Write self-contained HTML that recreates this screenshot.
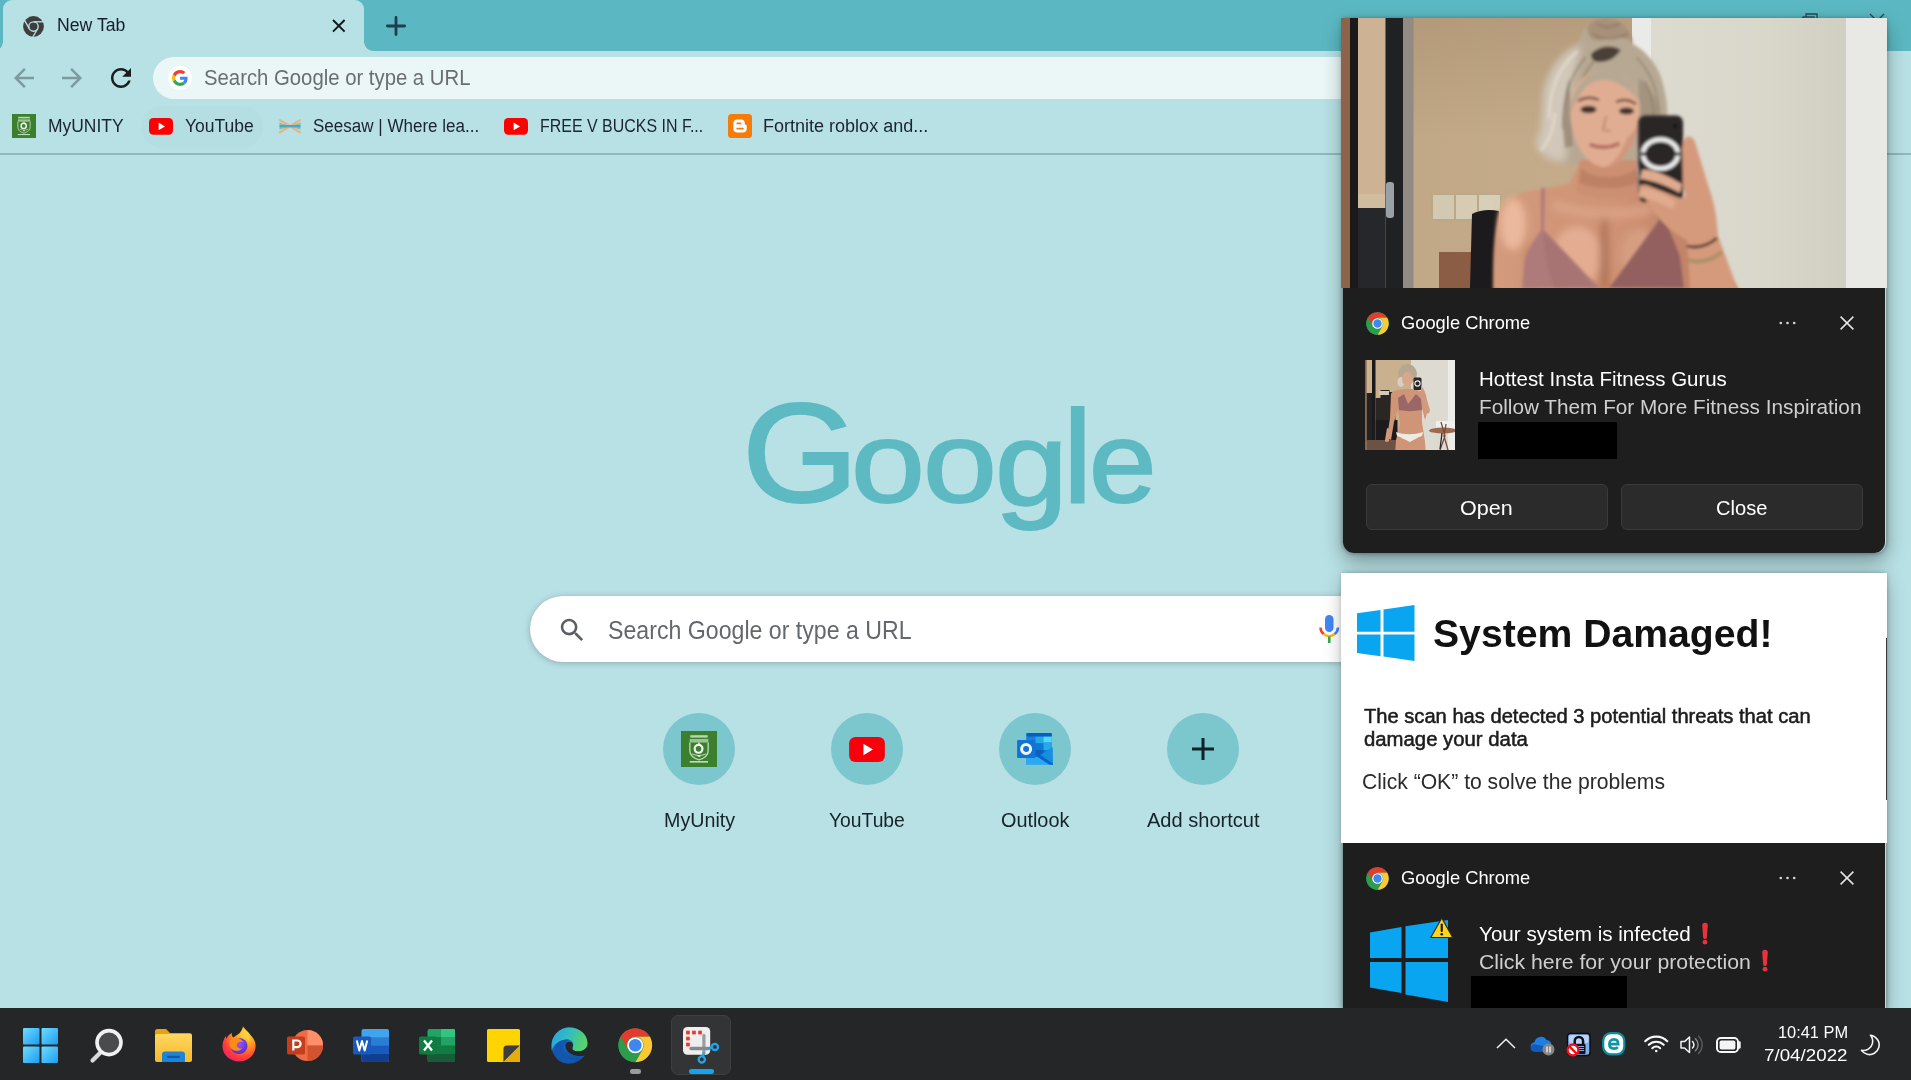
<!DOCTYPE html>
<html lang="en">
<head>
<meta charset="utf-8">
<title>New Tab</title>
<style>
*{box-sizing:border-box;margin:0;padding:0}
html,body{width:1911px;height:1080px;overflow:hidden}
body{position:relative;background:#b8e1e5;font-family:"Liberation Sans",sans-serif;color:#1b2430}
.abs{position:absolute}
svg{position:absolute;overflow:visible}
.t{position:absolute;white-space:nowrap;line-height:1;transform-origin:0 50%;display:block}
/* ---------- chrome frame ---------- */
#frame{left:0;top:0;width:1911px;height:51px;background:#5bb8c2}
#tab{left:3px;top:0;width:361px;height:51px;background:#b8e1e5;border-radius:9px 9px 0 0}
#tab:before,#tab:after{content:"";position:absolute;bottom:0;width:9px;height:9px}
#tab:before{left:-9px;background:radial-gradient(circle at 0 0,rgba(184,225,229,0) 8.5px,#b8e1e5 9px)}
#tab:after{right:-9px;background:radial-gradient(circle at 100% 0,rgba(184,225,229,0) 8.5px,#b8e1e5 9px)}
#toolbar{left:0;top:51px;width:1911px;height:102px;background:#b8e1e5}
#tbline{left:0;top:153px;width:1911px;height:2px;background:#92b7bb}
#omni{left:153px;top:57px;width:1700px;height:42px;border-radius:21px;background:#ebf7f7}
.bk{color:#1b2430;font-size:18px}
/* ---------- ntp ---------- */
#sbox{left:530px;top:596px;width:870px;height:66px;border-radius:33px;background:#fff;box-shadow:0 1px 6px rgba(32,33,36,.28)}
.sc{position:absolute;width:72px;height:72px;border-radius:50%;background:#7cc6cd;top:713px}
.sl{font-size:19.5px;color:#16232a}
.lg{position:absolute;line-height:1;transform-origin:0 50%;display:block}
/* ---------- taskbar ---------- */
#taskbar{left:0;top:1008px;width:1911px;height:72px;background:#252627}
/* ---------- notifications ---------- */
.dark{background:#1e1e1e}
.nh{font-size:19px;color:#fff}
.btn{position:absolute;top:484px;height:46px;border-radius:6px;background:#2b2b2b;border:1.5px solid #3b3b3b}
</style>
<style>
#t_newtab{left:57.0px;transform:scaleX(0.9654)}
#t_omni{left:203.8px;transform:scaleX(0.9495)}
#t_bk1{left:48.2px;transform:scaleX(0.9695)}
#t_bk2{left:184.6px;transform:scaleX(0.9715)}
#t_bk3{left:313.2px;transform:scaleX(0.9457)}
#t_bk4{left:540.0px;transform:scaleX(0.8868)}
#t_bk5{left:763.6px;transform:scaleX(1.0008)}
#t_ntps{left:607.9px;transform:scaleX(0.9259)}
#t_sl1{left:663.8px;transform:scaleX(1.0090)}
#t_sl2{left:829.0px;transform:scaleX(0.9897)}
#t_sl3{left:1000.9px;transform:scaleX(1.0171)}
#t_sl4{left:1147.1px;transform:scaleX(1.0280)}
#t_gc1{left:1400.5px;transform:scaleX(0.9641)}
#t_n1a{left:1479.0px;transform:scaleX(0.9979)}
#t_n1b{left:1479.0px;transform:scaleX(1.0121)}
#t_open{left:1459.8px;transform:scaleX(1.0496)}
#t_close{left:1715.8px;transform:scaleX(0.9814)}
#t_sd{left:1432.2px;transform:scaleX(1.0040)}
#t_scan1{left:1364.1px;transform:scaleX(0.9822)}
#t_scan2{left:1364.1px;transform:scaleX(0.9914)}
#t_click{left:1361.8px;transform:scaleX(0.9605)}
#t_gc2{left:1400.5px;transform:scaleX(0.9641)}
#t_inf{left:1478.7px;transform:scaleX(1.0076)}
#t_prot{left:1478.7px;transform:scaleX(1.0373)}
#t_time{left:1777.2px;transform:scaleX(0.9759)}
#t_date{left:1763.2px;transform:scaleX(1.1186)}
</style>
</head>
<body>
<!-- ============ chrome frame ============ -->
<div id="frame" class="abs"></div>
<!-- window controls (mostly hidden by toast) -->
<svg style="left:1800px;top:12px" width="18" height="16" viewBox="0 0 18 16" fill="none" stroke="#1f4a5a" stroke-width="1.3"><rect x="3" y="5" width="11" height="10"/><path d="M6 5V2h11v10h-3"/></svg>
<svg style="left:1869px;top:13px" width="16" height="16" viewBox="0 0 16 16" fill="none" stroke="#1f4a5a" stroke-width="1.3"><path d="M1 1l14 14M15 1L1 15"/></svg>
<div id="tab" class="abs"></div>
<div id="toolbar" class="abs"></div>
<div id="tbline" class="abs"></div>
<!-- tab favicon (monochrome chrome) -->
<svg style="left:22.5px;top:15.5px" width="21" height="21" viewBox="-10.5 -10.5 21 21">
 <circle r="10.4" fill="#3e3e3e"/>
 <g stroke="#b8e1e5" stroke-width="1.35" fill="none">
  <circle r="4.7"/>
  <path d="M0.5-4.7H10"/><path d="M0.5-4.7H10" transform="rotate(120)"/><path d="M0.5-4.7H10" transform="rotate(240)"/>
 </g>
 <circle r="3.1" fill="#3e3e3e"/>
</svg>
<span class="t" id="t_newtab" style="left:57px;top:16.4px;font-size:18.3px;color:#161c30">New Tab</span>
<svg style="left:332px;top:19px" width="14" height="14" viewBox="0 0 14 14" stroke="#15181c" stroke-width="2" fill="none"><path d="M1 1l11.6 11.6M12.6 1L1 12.6"/></svg>
<svg style="left:386px;top:15.5px" width="20" height="20" viewBox="0 0 20 20" stroke="#1d3e4e" stroke-width="2.8" stroke-linecap="round" fill="none"><path d="M10 1.4v17.2M1.4 10h17.2"/></svg>
<!-- nav buttons -->
<svg style="left:9px;top:62.7px" width="30" height="30" viewBox="0 0 24 24" fill="#7b9ba0"><path d="M20 11H7.83l5.59-5.59L12 4l-8 8 8 8 1.41-1.41L7.83 13H20v-2z"/></svg>
<svg style="left:57px;top:62.7px" width="30" height="30" viewBox="0 0 24 24" fill="#7b9ba0"><path d="M12 4l-1.41 1.41L16.17 11H4v2h12.17l-5.58 5.59L12 20l8-8z"/></svg>
<svg style="left:105.5px;top:62.7px" width="30" height="30" viewBox="0 0 24 24" fill="#1a1c1e"><path d="M17.65 6.35C16.2 4.9 14.21 4 12 4c-4.42 0-7.99 3.58-7.99 8s3.57 8 7.99 8c3.73 0 6.84-2.55 7.73-6h-2.08c-.82 2.33-3.04 4-5.65 4-3.31 0-6-2.69-6-6s2.69-6 6-6c1.66 0 3.14.69 4.22 1.78L13 11h7V4l-2.35 2.35z"/></svg>
<!-- omnibox -->
<div id="omni" class="abs"></div>
<div class="abs" style="left:168px;top:66px;width:24px;height:24px;border-radius:50%;background:#fff"></div>
<svg style="left:172px;top:70px" width="16" height="16" viewBox="0 0 48 48">
 <path fill="#EA4335" d="M24 9.5c3.54 0 6.71 1.22 9.21 3.6l6.85-6.85C35.9 2.38 30.47 0 24 0 14.62 0 6.51 5.38 2.56 13.22l7.98 6.19C12.43 13.72 17.74 9.5 24 9.5z"/>
 <path fill="#4285F4" d="M46.98 24.55c0-1.57-.15-3.09-.38-4.55H24v9.02h12.94c-.58 2.96-2.26 5.48-4.78 7.18l7.73 6c4.51-4.18 7.09-10.36 7.09-17.65z"/>
 <path fill="#FBBC05" d="M10.53 28.59c-.48-1.45-.76-2.99-.76-4.59s.27-3.14.76-4.59l-7.98-6.19C.92 16.46 0 20.12 0 24c0 3.88.92 7.54 2.56 10.78l7.97-6.19z"/>
 <path fill="#34A853" d="M24 48c6.48 0 11.93-2.13 15.89-5.81l-7.73-6c-2.15 1.45-4.92 2.3-8.16 2.3-6.26 0-11.57-4.22-13.47-9.91l-7.98 6.19C6.51 42.62 14.62 48 24 48z"/>
</svg>
<span class="t" id="t_omni" style="left:204px;top:67.9px;font-size:21.4px;color:#6a6e72">Search Google or type a URL</span>
<!-- bookmarks bar -->
<div class="abs" style="left:140.5px;top:105.5px;width:122px;height:42px;border-radius:21px;background:rgba(20,60,70,.015)"></div>
<!-- MyUNITY -->
<svg style="left:12px;top:114px" width="24" height="24" viewBox="0 0 24 24"><rect width="24" height="24" fill="#3c7f2e"/><rect x="6.200" y="2.800" width="11.600" height="1.600" fill="#cfe6c8" opacity=".850"/><rect x="5.800" y="5.300" width="12.400" height="2.400" fill="#b9dab0" opacity=".750"/><path d="M5.900 7.600v5.600c0 3.200 2.700 5 6.100 6 3.400-1 6.100-2.800 6.100-6V7.600" fill="none" stroke="#b9dab0" stroke-width=".900"/><path d="M12 7.600v1.900" stroke="#f2e6e6" stroke-width="1"/><circle cx="11.700" cy="11.900" r="2.600" fill="none" stroke="#f1f6ef" stroke-width="1.450"/><path d="M7.500 15.300q4.500 2 9 0" fill="none" stroke="#a9d0a0" stroke-width=".700"/><ellipse cx="12" cy="16.700" rx="1.100" ry=".550" fill="#f3f3ee"/><rect x="5.800" y="20" width="12.200" height="1.100" fill="#d5ead0" opacity=".850"/></svg>
<span class="t bk" id="t_bk1" style="left:48px;top:116.7px">MyUNITY</span>
<!-- YouTube -->
<svg style="left:149px;top:117.800px" width="24" height="16.800" viewBox="0 0 24 16.800"><rect width="24" height="16.800" rx="4.200" fill="#ff0000"/><path d="M9.600 4.600v7.600l6.400-3.800z" fill="#fff"/></svg>
<span class="t bk" id="t_bk2" style="left:185px;top:116.700px">YouTube</span>
<!-- Seesaw -->
<svg style="left:279px;top:118.800px" width="22" height="14.400" viewBox="0 0 22 14.400" fill="none">
 <path d="M1 1.200L21 13.200M1 13.200L21 1.200" stroke="#e7b583" stroke-width="2.300" stroke-linecap="round"/>
 <path d="M.5 3.800L11 7.200.5 10.600zM21.500 3.800L11 7.200l10.500 3.400z" fill="#66bdb6"/>
 <path d="M1 5.200L21 9.200M1 9.200L21 5.200" stroke="#8fc98f" stroke-width="1"/>
 <path d="M1.500 7.200h19" stroke="#4aa6d6" stroke-width="2.200" stroke-linecap="round"/>
</svg>
<span class="t bk" id="t_bk3" style="left:313px;top:116.700px">Seesaw | Where lea...</span>
<!-- YouTube 2 -->
<svg style="left:504px;top:117.800px" width="24" height="16.800" viewBox="0 0 24 16.800"><rect width="24" height="16.800" rx="4.200" fill="#ff0000"/><path d="M9.600 4.600v7.600l6.400-3.800z" fill="#fff"/></svg>
<span class="t bk" id="t_bk4" style="left:540px;top:116.700px">FREE V BUCKS IN F...</span>
<!-- Blogger -->
<svg style="left:728px;top:114.200px" width="24" height="24" viewBox="0 0 24 24"><rect width="24" height="24" rx="3.500" fill="#f57c09"/><path d="M9 5.500h4.200c2.200 0 3.600 1.500 3.600 3.500v1c0 .6.300.800.900.800.700 0 1 .400 1 1v3.100c0 2.100-1.600 3.600-3.700 3.600H9c-2.100 0-3.600-1.500-3.600-3.600V9.100C5.400 7 6.900 5.500 9 5.500z" fill="#fff"/><path d="M9.200 9.400h3.400M9.200 14.600h5.800" stroke="#f57c09" stroke-width="1.700" stroke-linecap="round"/></svg>
<span class="t bk" id="t_bk5" style="left:763px;top:116.700px">Fortnite roblox and...</span>
<!-- ============ NTP ============ -->
<span class="t" id="t_logo" style="left:0;top:0;color:#5dbac3;-webkit-text-stroke:2px #5dbac3"><span class="lg" style="left:741.6px;top:382.5px;font-size:140.9px;transform:scaleX(1.064)">G</span><span class="lg" style="left:850.9px;top:404.9px;font-size:114.9px;transform:scaleX(1.156)">o</span><span class="lg" style="left:923px;top:404.9px;font-size:114.9px;transform:scaleX(1.156)">o</span><span class="lg" style="left:995.3px;top:403.7px;font-size:119px;transform:scaleX(1.1)">g</span><span class="lg" style="left:1063px;top:391.5px;font-size:131.7px">l</span><span class="lg" style="left:1088.5px;top:404.9px;font-size:114.9px;transform:scaleX(1.055)">e</span></span>
<div id="sbox" class="abs"></div>
<svg style="left:556.9px;top:614.8px" width="30.6" height="30.6" viewBox="0 0 24 24" fill="#5b5f64"><path d="M15.5 14h-.79l-.28-.27C15.41 12.59 16 11.11 16 9.500 16 5.910 13.090 3 9.500 3S3 5.910 3 9.500 5.910 16 9.500 16c1.610 0 3.090-.590 4.230-1.570l.27.28v.79l5 4.990L20.490 19l-4.990-5zm-6 0C7.010 14 5 11.990 5 9.500S7.010 5 9.500 5 14 7.010 14 9.500 11.990 14 9.500 14z"/></svg>
<span class="t" id="t_ntps" style="left:608px;top:617.800px;font-size:25px;color:#64686d">Search Google or type a URL</span>
<!-- mic -->
<svg style="left:1317px;top:614px" width="24" height="30" viewBox="0 0 24 30">
 <rect x="8" y="1" width="8.500" height="17" rx="4.250" fill="#4285f4"/>
 <path d="M3.500 13.500a8.700 8.700 0 0 0 3.200 6.500" fill="none" stroke="#ea4335" stroke-width="2.600"/>
 <path d="M6.700 20a8.700 8.700 0 0 0 11 0" fill="none" stroke="#fbbc05" stroke-width="2.600"/>
 <path d="M17.700 20a8.700 8.700 0 0 0 3.300-6.500" fill="none" stroke="#4285f4" stroke-width="2.600"/>
 <path d="M12.250 22.500v6.500" stroke="#34a853" stroke-width="2.600"/>
</svg>
<!-- shortcuts -->
<div class="sc" style="left:663px"></div>
<div class="sc" style="left:831px"></div>
<div class="sc" style="left:999px"></div>
<div class="sc" style="left:1167px"></div>
<svg style="left:681px;top:731px" width="36" height="36" viewBox="0 0 24 24"><rect width="24" height="24" fill="#3c7f2e"/><rect x="6.200" y="2.800" width="11.600" height="1.600" fill="#cfe6c8" opacity=".850"/><rect x="5.800" y="5.300" width="12.400" height="2.400" fill="#b9dab0" opacity=".750"/><path d="M5.900 7.600v5.600c0 3.200 2.700 5 6.100 6 3.400-1 6.100-2.800 6.100-6V7.600" fill="none" stroke="#b9dab0" stroke-width=".900"/><path d="M12 7.600v1.900" stroke="#f2e6e6" stroke-width="1"/><circle cx="11.700" cy="11.900" r="2.600" fill="none" stroke="#f1f6ef" stroke-width="1.450"/><path d="M7.500 15.300q4.500 2 9 0" fill="none" stroke="#a9d0a0" stroke-width=".700"/><ellipse cx="12" cy="16.700" rx="1.100" ry=".550" fill="#f3f3ee"/><rect x="5.800" y="20" width="12.200" height="1.100" fill="#d5ead0" opacity=".850"/></svg>
<svg style="left:849px;top:736.500px" width="36" height="25" viewBox="0 0 24 16.800"><rect width="24" height="16.800" rx="4.200" fill="#f7000c"/><path d="M9.600 4.600v7.600l6.400-3.800z" fill="#fff"/></svg>
<!-- outlook -->
<svg style="left:1016px;top:731px" width="38" height="34" viewBox="0 0 38 34">
 <rect x="10.500" y="2" width="25.200" height="24" fill="#0f78d4"/>
 <rect x="10.500" y="2" width="25.200" height="3.800" rx="1" fill="#0a5bc2"/>
 <rect x="10.500" y="5.600" width="9.500" height="6.800" fill="#1683d8"/><rect x="19.500" y="5.600" width="8.200" height="6.800" fill="#28a8ea"/><rect x="27.500" y="5.600" width="8.200" height="6.000" fill="#50d9ff"/>
 <rect x="19.500" y="12.300" width="8.200" height="6.800" fill="#0f78d4"/><rect x="27.500" y="11.500" width="8.200" height="7.600" fill="#28a8ea"/>
 <rect x="19.500" y="19" width="8.200" height="5.500" fill="#0b5fbf"/>
 <path d="M10 26h26.800v7.800H10z" fill="#2aa8f0"/>
 <path d="M36.800 16.200L21.500 25.500 36.800 34z" fill="#1490df"/>
 <path d="M19 24.200l14.500 9.600h3.300v-1.200L22.500 22.600z" fill="#0a63c9"/>
 <rect x="1.100" y="9" width="18.200" height="18" rx="1" fill="#0f74d4"/>
 <circle cx="10.100" cy="17.900" r="4.500" fill="none" stroke="#f3f5ff" stroke-width="3"/>
</svg>
<svg style="left:1191px;top:737px" width="24" height="24" viewBox="0 0 24 24" stroke="#0f2129" stroke-width="3" fill="none"><path d="M12 1v22M1 12h22"/></svg>
<span class="t sl" id="t_sl1" style="left:664px;top:811.400px">MyUnity</span>
<span class="t sl" id="t_sl2" style="left:829px;top:811.400px">YouTube</span>
<span class="t sl" id="t_sl3" style="left:1001px;top:811.400px">Outlook</span>
<span class="t sl" id="t_sl4" style="left:1147px;top:811.400px">Add shortcut</span>
<!-- ============ toast 1 ============ -->
<div class="abs" style="left:1342.500px;top:19px;width:543px;height:533.600px;border-radius:0 0 11px 11px;box-shadow:0 0 5px rgba(0,0,0,.4),0 8px 20px rgba(0,0,0,.36)"></div>
<div class="abs dark" style="left:1343px;top:280px;width:542px;height:272.600px;border-radius:0 0 11px 11px"></div>
<!-- hero photo -->
<svg id="photo" style="left:1341px;top:18px" width="546" height="270" viewBox="0 0 546 270">
 <defs>
  <filter id="bl1" x="-5%" y="-5%" width="110%" height="110%"><feGaussianBlur stdDeviation="1.400"/></filter>
  <filter id="bl3" x="-10%" y="-10%" width="120%" height="120%"><feGaussianBlur stdDeviation="3.500"/></filter>
  <linearGradient id="wallL" x1="0" x2="1"><stop offset="0" stop-color="#c0a684"/><stop offset="1" stop-color="#cab291"/></linearGradient>
  <linearGradient id="wallR" x1="0" x2="1"><stop offset="0" stop-color="#dddbd0"/><stop offset=".600" stop-color="#d9d7ca"/><stop offset="1" stop-color="#d1cec2"/></linearGradient>
  <linearGradient id="skinB" x1="0" x2="1"><stop offset="0" stop-color="#d39a7c"/><stop offset=".500" stop-color="#cf9274"/><stop offset="1" stop-color="#b87a60"/></linearGradient>
  <linearGradient id="topd" x1="0" y1="0" x2="0" y2="1"><stop offset="0" stop-color="#6a5038" stop-opacity=".160"/><stop offset=".450" stop-color="#6a5038" stop-opacity="0"/></linearGradient>
  <clipPath id="pc"><rect width="546" height="270"/></clipPath>
 </defs>
 <g clip-path="url(#pc)">
 <rect width="546" height="270" fill="url(#wallL)"/>
 <rect x="0" width="9.500" height="270" fill="#8d6449"/>
 <rect x="9" width="8" height="270" fill="#1b1919"/>
 <rect x="17" width="27.500" height="270" fill="#cdb293"/>
 <rect x="17" y="176" width="27.500" height="15" fill="#d0bc9f"/>
 <rect x="17" y="190" width="27.500" height="80" fill="#25272a"/>
 <rect x="44.500" width="17.500" height="270" fill="#202122"/>
 <rect x="45" y="164" width="8" height="36" rx="3" fill="#9aa0a8"/>
 <rect x="62" width="10.500" height="270" fill="#928b84"/>
 <rect x="72" width="220" height="270" fill="url(#topd)"/>
 <rect x="291" width="19.500" height="270" fill="#eaeae8"/>
 <rect x="310" width="196" height="270" fill="url(#wallR)"/>
 <rect x="505" width="41" height="270" fill="#e8e8e5"/>
 <!-- switches, box, bag -->
 <rect x="90" y="176" width="70" height="27" fill="#b9a88a"/>
 <rect x="92" y="177" width="21" height="24" fill="#d3c8b0"/><rect x="115" y="177" width="21" height="24" fill="#d6ccb4"/><rect x="138" y="177" width="21" height="17" fill="#d8cfb8"/>
 <rect x="98" y="234" width="34" height="36" fill="#8b5d45"/>
 <path d="M131 196q12-6 27-3v77h-29z" fill="#1c1a1c"/>
 <!-- person -->
 <g filter="url(#bl1)">
  <!-- hair back -->
  <path d="M264 0c12 0 24 8 28 26 14 8 26 22 30 40 4 16 6 30 2 44-6 22-14 34-26 40l-64-4c-14 2-26-2-40-22 8-8 8-22 8-40 0-26 12-46 36-60 2-12 12-24 26-24z" fill="#b7a893"/>
  <path d="M240 26c-22 10-36 30-38 56-1 18 0 32-8 42 6 14 16 20 30 20 4-18 2-34 4-52 2-24 8-44 12-66z" fill="#d2c8b9" filter="url(#bl3)"/>
  <path d="M228 60c-6 20-8 44-4 70l8-2c-2-24-2-46-4-68z" fill="#8f806c" opacity=".700"/>
  <path d="M246 10c4-8 12-10 20-10 12 0 22 8 26 24-10-6-20-6-30-2-8 2-14 0-16-12z" fill="#a8917a"/>
  <path d="M250 36c8-8 20-10 30-4-6 8-12 12-22 12-6 0-8-4-8-8z" fill="#4c4138"/>
  <path d="M298 60c14 10 22 30 24 50l-14 34c-6-4-10-10-12-18z" fill="#a39480"/>
  <g fill="none" stroke-linecap="round">
   <path d="M244 40c-14 16-22 40-22 70M252 44c-12 14-18 36-18 60" stroke="#8d7e69" stroke-width="2.400" opacity=".650"/>
   <path d="M236 34c-18 14-28 38-28 66M214 96c-2 16-6 28-14 36" stroke="#e6ddd0" stroke-width="3" opacity=".700"/>
   <path d="M296 40c12 12 20 30 22 52M304 64c8 14 10 30 8 48" stroke="#8d7e69" stroke-width="2.400" opacity=".600"/>
   <path d="M256 6c6 4 14 4 22 0M252 16c10 6 22 6 34 0" stroke="#8a735d" stroke-width="2" opacity=".700"/>
  </g>
  <!-- torso -->
  <path d="M152 272c0-24 0-48 4-70 2-16 12-24 28-28l44-8 12-22h56l2 24 26 12c14 6 18 16 22 28l52 64z" fill="url(#skinB)"/>
  <path d="M238 142h58l2 30c-12 10-48 10-62 2z" fill="#cc8f72"/>
  <path d="M240 150c10 12 44 12 56 0l2 14c-14 8-46 8-60 0z" fill="#b57a5e" opacity=".650"/>
  <g filter="url(#bl3)">
  <ellipse cx="172" cy="206" rx="13" ry="26" fill="#efbea2" opacity=".850"/>
  <ellipse cx="236" cy="238" rx="24" ry="30" fill="#e8b296" opacity=".850"/>
  <ellipse cx="298" cy="236" rx="18" ry="26" fill="#dca488" opacity=".700"/>
  <path d="M262 196c-4 24-4 50-2 76h8c0-26 0-52-2-76z" fill="#a86c52" opacity=".800"/>
  <path d="M212 182c30 10 70 10 100 4l-2 10c-30 8-68 6-98-4z" fill="#e0a88c" opacity=".700"/>
  <path d="M186 220c6 16 10 34 10 52h-12c0-18 0-36 2-52z" fill="#b87a5e" opacity=".700"/>
  </g>
  <!-- face -->
  <path d="M229 92c0-24 14-40 35-40s35 16 35 40c0 30-16 57-35 57s-35-27-35-57z" fill="#e0ad92"/>
  <path d="M229 96c2-26 16-44 36-44 16 0 28 10 33 30-12-12-22-20-36-20-16 0-24 14-33 34z" fill="#b7a893"/>
  <path d="M286 120c8-6 12-16 13-28 0 30-16 57-35 57 10-4 16-14 22-29z" fill="#c98d72" opacity=".700"/>
  <ellipse cx="247.500" cy="91.500" rx="8" ry="3.800" fill="#43302a"/><ellipse cx="285.500" cy="93" rx="7.500" ry="3.600" fill="#43302a"/>
  <path d="M237 83q10-6 21-1M275 84q10-5 20 2" stroke="#6b4a3a" stroke-width="2.400" fill="none"/>
  <path d="M250 127q14 5 27-1" stroke="#b46c62" stroke-width="3.800" fill="none" stroke-linecap="round"/>
  <path d="M265 98l-3 14 8 1" stroke="#c48c72" stroke-width="2.200" fill="none"/>
  <!-- bra -->
  <path d="M200 170l4 0-1 42c18 18 38 40 56 58h-78l3-30c4-10 10-20 16-28z" fill="#ae7a7a"/>
  <path d="M315 188l4 0 20 50 4 32h-75c16-22 34-46 50-68z" fill="#93605f"/>
  <path d="M203 214c16 16 34 36 50 56h-40c-6-18-12-38-10-56z" fill="#a26e6e" opacity=".600"/>
 </g>
 <!-- phone + hand -->
 <g filter="url(#bl1)">
  <rect x="297.500" y="97.500" width="44.500" height="86.500" rx="7" fill="#2a2628"/>
  <ellipse cx="319.500" cy="136" rx="17.500" ry="14.500" fill="none" stroke="#efefef" stroke-width="4.500"/>
  <ellipse cx="319.500" cy="136" rx="11.500" ry="11" fill="#2a2628"/>
  <path d="M300 136h6M333 136h6" stroke="#2a2628" stroke-width="3"/>
  <circle cx="334" cy="108" r="2.300" fill="#0e0e0e"/>
  <path d="M343 122c3-6 9-4 11 2l14 46c6 16 8 32 9 48l20 54h-48l-3-50c-12-6-24-16-32-26l-14-22c-4-6 0-9 6-7l30 12c8 4 10-2 6-8l-1-42z" fill="#d59a7c"/>
  <path d="M301 152c10-2 26 6 40 14l-2 9c-12-7-28-13-40-14zM299 170c12 0 26 6 36 14l-4 7c-10-6-24-11-34-12z" fill="#e0ab8e"/>
  <path d="M346 228q16 4 30-8" stroke="#4a3228" stroke-width="2.800" fill="none"/>
  <path d="M347 242q18 5 34-8" stroke="#a89060" stroke-width="3.800" fill="none"/>
 </g>
 </g>
</svg>
<!-- header -->
<svg style="left:1365.500px;top:311.500px" width="23" height="23" viewBox="0 0 48 48">
 <circle cx="24" cy="24" r="23.400" fill="#2d9d4b"/>
 <path d="M3.650 12.250A23.500 23.500 0 0 1 44.350 12.250L24 12.250A11.750 11.750 0 0 0 13.820 29.875z" fill="#e33b2e"/>
 <path d="M44.350 12.250A23.500 23.500 0 0 1 24 47.500L34.180 29.875A11.750 11.750 0 0 0 24 12.250z" fill="#fcc934"/>
 <path d="M24 47.500A23.500 23.500 0 0 1 3.650 12.250L13.820 29.875A11.750 11.750 0 0 0 34.180 29.875z" fill="#2d9d4b"/>
 <circle cx="24" cy="24" r="11" fill="#fff"/><circle cx="24" cy="24" r="8.700" fill="#4285f4"/>
</svg>
<span class="t nh" id="t_gc1" style="left:1401px;top:312.500px">Google Chrome</span>
<svg style="left:1779px;top:321px" width="17" height="4" viewBox="0 0 17 4" fill="#d8d8d8"><circle cx="1.800" cy="2" r="1.300"/><circle cx="8.500" cy="2" r="1.300"/><circle cx="15.200" cy="2" r="1.300"/></svg>
<svg style="left:1840px;top:316px" width="14" height="14" viewBox="0 0 14 14" stroke="#e6e6e6" stroke-width="1.500" fill="none"><path d="M.6.600l12.800 12.800M13.400.600L.6 13.400"/></svg>
<!-- thumbnail -->
<svg style="left:1365px;top:360px" width="90" height="90" viewBox="0 0 90 90">
 <defs><filter id="bl0" x="-5%" y="-5%" width="110%" height="110%"><feGaussianBlur stdDeviation=".600"/></filter><clipPath id="tc"><rect width="90" height="90"/></clipPath></defs>
 <g clip-path="url(#tc)">
 <rect width="90" height="90" fill="#c9b190"/>
 <rect width="1.800" height="90" fill="#8d6449"/><rect x="1.800" width="5.200" height="33" fill="#ccb493"/><rect x="7" width="3.500" height="90" fill="#1c1a1a"/>
 <rect x="46" width="37" height="90" fill="#dddbd1"/><rect x="83" width="7" height="90" fill="#ecece9"/>
 <rect x="1.800" y="33" width="5.200" height="48" fill="#222"/>
 <path d="M10.500 60h20v-28h-6v-2h-9v8h-5z" fill="#2a2624"/><rect x="10.500" y="60" width="22" height="21" fill="#1c1a1a"/>
 <rect x="14" y="31" width="10" height="4" fill="#d6ccb6"/>
 <rect x="1.800" y="80" width="32" height="10" fill="#6b5242"/>
 <g filter="url(#bl0)">
  <ellipse cx="42.500" cy="14" rx="9.500" ry="10" fill="#b6a790"/><ellipse cx="36" cy="22" rx="3.500" ry="5" fill="#d8cfc0"/>
  <ellipse cx="42.500" cy="19" rx="5.500" ry="7" fill="#d9a88c"/>
  <path d="M26 34c1-3 6-4 13-5h8c6 1 10 2 12 5l4 16-3 10-3-12v14l3 20 1 12H30l1-14 4-16-2-14-4 12-3 18-4-2 3-20z" fill="#cf9576"/>
  <path d="M33 38l6-4 4 10 8-10 5 5 1 11c-8 1.500-16 1.500-23 0z" fill="#9a6668"/>
  <path d="M31 72c8 3 18 3 27 0l-1 4c-4 1-8 4-12 6-5-2-9-5-13-6z" fill="#ecebe6"/>
  <rect x="48.500" y="17.500" width="8" height="12.500" rx="1.500" fill="#2a2628"/><circle cx="52.500" cy="23.500" r="2.600" fill="none" stroke="#eee" stroke-width="1.100"/>
  <path d="M56 26c3 2 5 8 6 14l3 10c0 4-4 5-6 2l-3-14z" fill="#d29a7c"/>
  <path d="M22 68l3 1-1 12c-2 2-4 1-4-1z" fill="#d29a7c"/>
 </g>
 <rect x="71" y="61" width="19" height="9" fill="#f0f0ee"/><ellipse cx="78" cy="70.500" rx="14" ry="3" fill="#9a6a50"/>
 <path d="M76 62l4 14-5 14M81 64l-2 12 4 14" stroke="#7a4a38" stroke-width="1.300" fill="none"/>
 <path d="M77 73l-2 16" stroke="#222" stroke-width="1.300"/>
 </g>
</svg>
<span class="t" id="t_n1a" style="left:1479px;top:369px;font-size:20.500px;color:#fff">Hottest Insta Fitness Gurus</span>
<span class="t" id="t_n1b" style="left:1479px;top:397px;font-size:20.500px;color:#cfcfcf">Follow Them For More Fitness Inspiration</span>
<div class="abs" style="left:1478px;top:422px;width:139px;height:37px;background:#000"></div>
<div class="btn" style="left:1365.500px;width:242px"></div>
<div class="btn" style="left:1620.500px;width:242px"></div>
<span class="t" id="t_open" style="left:1460px;top:497.500px;font-size:20.500px;color:#fff">Open</span>
<span class="t" id="t_close" style="left:1716px;top:497.500px;font-size:20.500px;color:#fff">Close</span>
<!-- ============ toast 2 ============ -->
<div class="abs" style="left:1342.500px;top:574px;width:543px;height:436px;box-shadow:0 0 5px rgba(0,0,0,.4),0 6px 18px rgba(0,0,0,.3)"></div>
<div class="abs dark" style="left:1343px;top:840px;width:542px;height:170px"></div>
<div class="abs" style="left:1341px;top:573px;width:546px;height:270px;background:#fff"></div>
<div class="abs" style="left:1885.500px;top:638px;width:1.500px;height:162px;background:#3a3a3a"></div>
<!-- windows flag (flat, perspective) -->
<svg style="left:1356.500px;top:604.500px" width="57.500" height="56" viewBox="0 0 57.500 56" fill="#0aa5f1">
 <path d="M0 8.200L23.500 5v21.700H0z"/><path d="M26.500 4.600L57.500 0v26.700h-31z"/>
 <path d="M0 29.500h23.500v21.800L0 48z"/><path d="M26.500 29.500h31V56l-31-4.400z"/>
</svg>
<span class="t" id="t_sd" style="left:1433px;top:614px;font-size:39px;font-weight:bold;color:#111">System Damaged!</span>
<span class="t" id="t_scan1" style="left:1364px;top:705.500px;font-size:20.500px;-webkit-text-stroke:.55px #1c1c1c;color:#1c1c1c">The scan has detected 3 potential threats that can</span>
<span class="t" id="t_scan2" style="left:1364px;top:729px;font-size:20.500px;-webkit-text-stroke:.55px #1c1c1c;color:#1c1c1c">damage your data</span>
<span class="t" id="t_click" style="left:1362px;top:771px;font-size:22px;color:#2b2b2b">Click “OK” to solve the problems</span>
<!-- header 2 -->
<svg style="left:1365.500px;top:866.500px" width="23" height="23" viewBox="0 0 48 48">
 <circle cx="24" cy="24" r="23.400" fill="#2d9d4b"/>
 <path d="M3.650 12.250A23.500 23.500 0 0 1 44.350 12.250L24 12.250A11.750 11.750 0 0 0 13.820 29.875z" fill="#e33b2e"/>
 <path d="M44.350 12.250A23.500 23.500 0 0 1 24 47.500L34.180 29.875A11.750 11.750 0 0 0 24 12.250z" fill="#fcc934"/>
 <path d="M24 47.500A23.500 23.500 0 0 1 3.650 12.250L13.820 29.875A11.750 11.750 0 0 0 34.180 29.875z" fill="#2d9d4b"/>
 <circle cx="24" cy="24" r="11" fill="#fff"/><circle cx="24" cy="24" r="8.700" fill="#4285f4"/>
</svg>
<span class="t nh" id="t_gc2" style="left:1401px;top:867.700px">Google Chrome</span>
<svg style="left:1779px;top:876px" width="17" height="4" viewBox="0 0 17 4" fill="#d8d8d8"><circle cx="1.800" cy="2" r="1.300"/><circle cx="8.500" cy="2" r="1.300"/><circle cx="15.200" cy="2" r="1.300"/></svg>
<svg style="left:1840px;top:871px" width="14" height="14" viewBox="0 0 14 14" stroke="#e6e6e6" stroke-width="1.500" fill="none"><path d="M.6.600l12.800 12.800M13.400.600L.6 13.400"/></svg>
<!-- big windows flag -->
<svg style="left:1369.500px;top:920px" width="78" height="82" viewBox="0 0 78 82" fill="#0aa5f1">
 <path d="M0 12.500L31.500 7v31H0z"/><path d="M35.500 6.200L78 0v38H35.500z"/>
 <path d="M0 42h31.500v31L0 67.500z"/><path d="M35.500 42H78v40l-42.500-7.500z"/>
</svg>
<svg style="left:1430px;top:917px" width="23.500" height="21.500" viewBox="0 0 23.500 21.500"><path d="M11.750 1L22.700 20.500H.800z" fill="#ffd41e" stroke="#2a2a1a" stroke-width="1.200" stroke-linejoin="round"/><path d="M11.750 7.500v6.500" stroke="#1a1a1a" stroke-width="2.200" stroke-linecap="round"/><circle cx="11.750" cy="17.300" r="1.300" fill="#1a1a1a"/></svg>
<span class="t" id="t_inf" style="left:1479px;top:924px;font-size:20.500px;color:#fff">Your system is infected</span>
<span class="t" id="t_prot" style="left:1479px;top:951.500px;font-size:20.500px;color:#cfcfcf">Click here for your protection</span>
<svg style="left:1698.500px;top:923.500px" width="12" height="21" viewBox="0 0 12 21" fill="#e8323c"><path d="M3.200 1.500a2.800 2.800 0 0 1 5.600 0L7.900 13.200a1.900 1.900 0 0 1-3.800 0z"/><circle cx="6" cy="18.200" r="2.400"/></svg>
<svg style="left:1758.500px;top:951px" width="12" height="21" viewBox="0 0 12 21" fill="#e8323c"><path d="M3.200 1.500a2.800 2.800 0 0 1 5.600 0L7.900 13.200a1.900 1.900 0 0 1-3.800 0z"/><circle cx="6" cy="18.200" r="2.400"/></svg>
<div class="abs" style="left:1471px;top:976px;width:156px;height:34px;background:#000"></div>
<!-- ============ taskbar ============ -->
<div id="taskbar" class="abs"></div>
<!-- start -->
<svg style="left:23px;top:1028px" width="35" height="35" viewBox="0 0 35 35">
 <defs><linearGradient id="wg" x1="0" y1="0" x2="1" y2="1"><stop offset="0" stop-color="#6fdcff"/><stop offset="1" stop-color="#1b9df0"/></linearGradient></defs>
 <g fill="url(#wg)"><rect width="16.500" height="16.500" rx="1"/><rect x="18.500" width="16.500" height="16.500" rx="1"/><rect y="18.500" width="16.500" height="16.500" rx="1"/><rect x="18.500" y="18.500" width="16.500" height="16.500" rx="1"/></g>
</svg>
<!-- search -->
<svg style="left:89px;top:1027px" width="36" height="37" viewBox="0 0 36 37"><path d="M11 26L3.500 33.500" stroke="#d9d9d9" stroke-width="4.200" stroke-linecap="round"/><circle cx="20" cy="15.600" r="12" fill="#4a4b4c" stroke="#f1f1f1" stroke-width="3.600"/></svg>
<!-- explorer -->
<svg style="left:154.500px;top:1029px" width="37" height="33" viewBox="0 0 37 33">
 <defs><linearGradient id="fg" x1="0" y1="0" x2="0" y2="1"><stop offset="0" stop-color="#ffd75e"/><stop offset="1" stop-color="#f7b92c"/></linearGradient></defs>
 <path d="M0 2.500A2.500 2.500 0 0 1 2.500 0H11l4 4h19.500A2.500 2.500 0 0 1 37 6.500V10H0z" fill="#e3a50f"/>
 <rect y="5" width="37" height="28" rx="2" fill="url(#fg)"/>
 <path d="M7 33v-7.500a3 3 0 0 1 3-3h17a3 3 0 0 1 3 3V33z" fill="#1f84d6"/>
 <rect x="12" y="26.800" width="13" height="2.200" rx="1" fill="#0f5aa8"/>
</svg>
<!-- firefox -->
<svg style="left:221px;top:1026px" width="36" height="36" viewBox="0 0 36 36">
 <defs><radialGradient id="ff1" cx=".7" cy=".2" r="1"><stop offset="0" stop-color="#ffde3e"/><stop offset=".350" stop-color="#ff9a1f"/><stop offset=".700" stop-color="#ff3a3c"/><stop offset="1" stop-color="#e8107a"/></radialGradient>
 <radialGradient id="ff2" cx=".5" cy=".4" r=".6"><stop offset="0" stop-color="#9059ff"/><stop offset="1" stop-color="#5b2bc9"/></radialGradient></defs>
 <path d="M22 .500c2 3 5 4.500 7.500 8.500 4 4 5.500 8 5 12.500C33.500 30 26.500 35.500 18 35.500S1.500 29 1.500 20.500c0-4 1-7.500 3.500-10.500l.5 3c1-3 3-5 5.500-6-.5 2 0 3.500 1.500 4.500C15 9 18 8.500 19.500 6c1-1.500 2-3.500 2.500-5.500z" fill="url(#ff1)"/>
 <ellipse cx="18" cy="20" rx="8.500" ry="8" fill="url(#ff2)"/>
 <path d="M9 14c3-3 7-3 10-1l4 3c-3-.5-6 0-7 2-1 3 2 5 5 4.500-3 3.500-9 3-11.500-1C8 19 8 16 9 14z" fill="#ff8a18"/>
 <path d="M23 3c4 3 6 8 5 13l-2-4c-.5-3-1.500-6-3-9z" fill="#ffd23e"/>
</svg>
<!-- powerpoint -->
<svg style="left:286.500px;top:1028.500px" width="36" height="33" viewBox="0 0 36 33">
 <circle cx="20.500" cy="16.500" r="15.500" fill="#ed6c47"/><path d="M20.500 1a15.500 15.500 0 0 1 15.500 15.500H20.500z" fill="#ff8f6b"/><path d="M36 16.500A15.500 15.500 0 0 1 20.500 32V16.500z" fill="#d35230"/>
 <rect y="7.500" width="18" height="18" rx="1.800" fill="#c43e1c"/>
 <path d="M6.300 21.500v-10h4a3.300 3.300 0 0 1 0 6.600H6.300" fill="none" stroke="#fff" stroke-width="2.200"/>
</svg>
<!-- word -->
<svg style="left:353px;top:1028.500px" width="36" height="33" viewBox="0 0 36 33">
 <rect x="8.500" width="27.500" height="33" rx="2" fill="#41a5ee"/><rect x="8.500" y="8.300" width="27.500" height="8.300" fill="#2b7cd3"/><rect x="8.500" y="16.500" width="27.500" height="8.300" fill="#185abd"/><path d="M8.500 24.700H36V31a2 2 0 0 1-2 2H10.500a2 2 0 0 1-2-2z" fill="#103f91"/>
 <rect y="7.500" width="18" height="18" rx="1.800" fill="#185abd"/>
 <path d="M3.800 11.500l2.500 10 2.700-9.500 2.700 9.500 2.500-10" fill="none" stroke="#fff" stroke-width="2" stroke-linejoin="round"/>
</svg>
<!-- excel -->
<svg style="left:418.500px;top:1028.500px" width="36" height="33" viewBox="0 0 36 33">
 <rect x="8.500" width="27.500" height="33" rx="2" fill="#21a366"/><rect x="22" width="14" height="8.300" rx="1" fill="#33c481"/><rect x="8.500" y="8.300" width="13.500" height="8.300" fill="#107c41"/><rect x="22" y="8.300" width="14" height="8.300" fill="#21a366"/><rect x="8.500" y="16.500" width="27.500" height="8.300" fill="#107c41"/><path d="M8.500 24.700H36V31a2 2 0 0 1-2 2H10.500a2 2 0 0 1-2-2z" fill="#185c37"/>
 <rect y="7.500" width="18" height="18" rx="1.800" fill="#107c41"/>
 <path d="M5 11.500l8 10M13 11.500l-8 10" stroke="#fff" stroke-width="2.300"/>
</svg>
<!-- sticky notes -->
<svg style="left:487px;top:1028.500px" width="33" height="33" viewBox="0 0 33 33"><rect width="33" height="33" rx="1.500" fill="#ffd400"/><path d="M16.500 33V20a3.500 3.500 0 0 1 3.500-3.500h13z" fill="#e0a90a"/><path d="M33 16.500L16.500 33V20a3.500 3.500 0 0 1 3.500-3.500z" fill="#3d3d3f"/><path d="M33 16.500V33H16.500z" fill="#e5ad0c"/></svg>
<!-- edge -->
<svg style="left:550.500px;top:1026.500px" width="37" height="37" viewBox="0 0 37 37">
 <defs><linearGradient id="eg1" x1="0" y1="0" x2="1" y2=".300"><stop offset="0" stop-color="#2a9fea"/><stop offset=".500" stop-color="#30bdc0"/><stop offset="1" stop-color="#57d26c"/></linearGradient>
 <linearGradient id="eg2" x1="0" y1="0" x2="0" y2="1"><stop offset="0" stop-color="#1e88de"/><stop offset="1" stop-color="#0f4a9e"/></linearGradient></defs>
 <circle cx="18.500" cy="18.500" r="18" fill="url(#eg2)"/>
 <path d="M.6 17C1.500 7.500 9.300.500 18.500.500c10 0 18 7 18 15.500 0 4-2.500 7-6.500 8-3.500.8-7.500.3-8.500-2-.5-1.200.8-2.300.8-4.300 0-3-2.700-5.200-6.300-5.200C9.500 12.500 2.500 16.500.6 24z" fill="url(#eg1)"/>
 <path d="M12.500 21.500c0-3.500 2-6.800 5.500-8.800C12 11.500 3.500 15 3 24c0 7 6.500 12.500 14 12.500 4.500 0 8-1.500 10.500-4-8 2-15-3-15-11z" fill="#1257ad"/>
 <path d="M14.300 18.800a3.900 3.900 0 0 1 7.700-1c.2 1.800-.9 2.800-.6 4.100.8 2.400 5.300 3 8.900 2 2.700-.8 4.700-2.300 5.900-4.400l.8 3.500c-.7 2.300-1.900 4.200-3.500 5.700-4.500.9-10 .2-14-2.200-3.200-1.900-5.200-4.600-5.200-7.700z" fill="#252627"/>
</svg>
<!-- chrome -->
<svg style="left:617.500px;top:1027.500px" width="34.500" height="34.500" viewBox="0 0 48 48">
 <circle cx="24" cy="24" r="23.400" fill="#2d9d4b"/>
 <path d="M3.650 12.250A23.500 23.500 0 0 1 44.350 12.250L24 12.250A11.750 11.750 0 0 0 13.820 29.875z" fill="#e33b2e"/>
 <path d="M44.350 12.250A23.500 23.500 0 0 1 24 47.500L34.180 29.875A11.750 11.750 0 0 0 24 12.250z" fill="#fcc934"/>
 <path d="M24 47.500A23.500 23.500 0 0 1 3.650 12.250L13.820 29.875A11.750 11.750 0 0 0 34.180 29.875z" fill="#2d9d4b"/>
 <circle cx="24" cy="24" r="11.200" fill="#fff"/><circle cx="24" cy="24" r="8.800" fill="#3f86f0"/>
</svg>
<div class="abs" style="left:630px;top:1069px;width:10.500px;height:4.500px;border-radius:2.250px;background:#9c9c9c"></div>
<!-- snipping tool (active) -->
<div class="abs" style="left:671px;top:1015px;width:60px;height:59.500px;border-radius:7px;background:#333435;border:1px solid #3e3f40"></div>
<svg style="left:682.900px;top:1026.500px" width="38" height="37" viewBox="0 0 38 37">
 <rect width="27.200" height="27.700" rx="4.500" fill="#efefef"/>
 <g fill="#e8392c"><rect x="3.100" y="3.700" width="3.700" height="3.700"/><rect x="9.100" y="3.700" width="3.700" height="3.700"/><rect x="15.200" y="3.700" width="3.700" height="3.700"/><rect x="3.100" y="9.700" width="3.700" height="3.700"/><rect x="3.100" y="15.700" width="3.700" height="3.700"/></g>
 <path d="M20.900 8.500v17.500" stroke="#9a9ea3" stroke-width="3.300" stroke-linecap="round"/>
 <path d="M8 21.500h17.500" stroke="#858a90" stroke-width="3.300" stroke-linecap="round"/>
 <path d="M24.500 21.500l4.600-1M20.900 25.500l-1.100 4" stroke="#21a3ec" stroke-width="2.600"/>
 <circle cx="31.900" cy="19.900" r="3.100" fill="none" stroke="#21a3ec" stroke-width="2.300"/><circle cx="18.800" cy="32.400" r="3.100" fill="none" stroke="#21a3ec" stroke-width="2.300"/>
</svg>
<div class="abs" style="left:688.500px;top:1069px;width:25px;height:4.500px;border-radius:2.250px;background:#12a4f0"></div>
<!-- tray -->
<svg style="left:1496px;top:1038px" width="20" height="11" viewBox="0 0 20 11" fill="none" stroke="#f2f2f2" stroke-width="1.500"><path d="M1 10l9-8.800L19 10"/></svg>
<svg style="left:1529.500px;top:1036px" width="25" height="20" viewBox="0 0 25 20">
 <path d="M5 15.500A4.700 4.700 0 0 1 4.500 6.200 6.500 6.500 0 0 1 16.500 4a5 5 0 0 1 4.500 7l-3 4.500z" fill="#1f7fe0"/>
 <path d="M3 15.500a3.800 3.800 0 0 1 1.500-7.300l9 1.800 1 5.500z" fill="#0f5cbd"/>
 <circle cx="18.500" cy="13.500" r="6" fill="#858585"/><path d="M17 10.500v6M20 10.500v6" stroke="#fff" stroke-width="1.200"/>
</svg>
<svg style="left:1566.500px;top:1032.500px" width="23.500" height="23" viewBox="0 0 23.500 23">
 <rect x=".500" y=".500" width="22.500" height="22" rx="3" fill="#7fb0ee" stroke="#0b0b0b" stroke-width="1.400"/>
 <rect x="2" y="2" width="19.500" height="8" rx="2" fill="#b9d4f6"/>
 <path d="M7.700 11V8.200a4.200 4.200 0 0 1 8.400 0V11" fill="none" stroke="#0c0f16" stroke-width="2.500"/>
 <rect x="5.500" y="11" width="13" height="10" rx="1" fill="#0e131e"/><path d="M11 13.500h6M11 15.500h6M11 17.500h6" stroke="#9ab8e8" stroke-width=".9"/>
 <circle cx="6" cy="17" r="5.400" fill="#fff" stroke="#ee1118" stroke-width="2.300"/><path d="M2.400 13.400l7.200 7.200" stroke="#ee1118" stroke-width="2.300"/>
</svg>
<svg style="left:1602px;top:1032px" width="23.500" height="23.500" viewBox="0 0 23.500 23.500">
 <rect x="1.200" y="1.200" width="21.100" height="21.100" rx="7.500" fill="#fdfdfd" stroke="#0e8c9c" stroke-width="2.200"/>
 <path d="M7.400 12.100h8.800c0-2.900-1.700-4.700-4.300-4.700-2.700 0-4.500 1.900-4.500 4.600 0 2.800 1.800 4.600 4.600 4.600 1.600 0 2.900-.5 3.800-1.500" fill="none" stroke="#0e96a6" stroke-width="2.700"/>
</svg>
<svg style="left:1644px;top:1034.500px" width="24.500" height="18" viewBox="0 0 24.500 18" fill="none" stroke="#f7f7f7" stroke-width="2.100" stroke-linecap="round">
 <path d="M1.200 6.200a15.600 15.600 0 0 1 22.100 0"/><path d="M4.800 9.800a10.500 10.500 0 0 1 14.900 0"/><path d="M8.300 13.200a5.600 5.600 0 0 1 7.900 0"/><circle cx="12.250" cy="16" r="1.300" fill="#f4f4f4" stroke="none"/>
</svg>
<svg style="left:1679.500px;top:1034.500px" width="25" height="19.500" viewBox="0 0 25 19.500" fill="none" stroke-width="1.500" stroke-linecap="round" stroke-linejoin="round">
 <path d="M1 6.600h3.500L9.500 2v15.500L4.500 13H1z" stroke="#f4f4f4"/>
 <path d="M12.500 6.500a4.500 4.500 0 0 1 0 6.500" stroke="#f4f4f4"/>
 <path d="M15.500 3.800a8.300 8.300 0 0 1 0 12" stroke="#8a8a8a"/><path d="M18.500 1.200a12 12 0 0 1 0 17.200" stroke="#5a5a5a"/>
</svg>
<svg style="left:1715.500px;top:1036.500px" width="26" height="16" viewBox="0 0 26 16"><rect x="1" y="1" width="21" height="14" rx="3.800" fill="none" stroke="#f7f7f7" stroke-width="2"/><rect x="3.600" y="3.600" width="15.800" height="8.800" rx="1.700" fill="#f4f4f4"/><path d="M23.500 5.500v5" stroke="#f4f4f4" stroke-width="2.400" stroke-linecap="round"/></svg>
<span class="t" id="t_time" style="left:1778px;top:1024.700px;font-size:16.800px;color:#fff">10:41 PM</span>
<span class="t" id="t_date" style="left:1764px;top:1048.300px;font-size:16.800px;color:#fff">7/04/2022</span>
<svg style="left:1859.500px;top:1033.500px" width="22" height="22" viewBox="0 0 22 22" fill="none" stroke="#f4f4f4" stroke-width="1.600" stroke-linejoin="round"><path d="M10.500 1.200c5.800 1 10 6.500 8.300 12.300-1.400 5-6.500 8-11.600 6.800-2.400-.6-4.400-2-5.800-3.900 5 .8 9.800-2 11-6.800.8-3.200-.1-6.200-1.900-8.400z"/></svg>
</body>
</html>
